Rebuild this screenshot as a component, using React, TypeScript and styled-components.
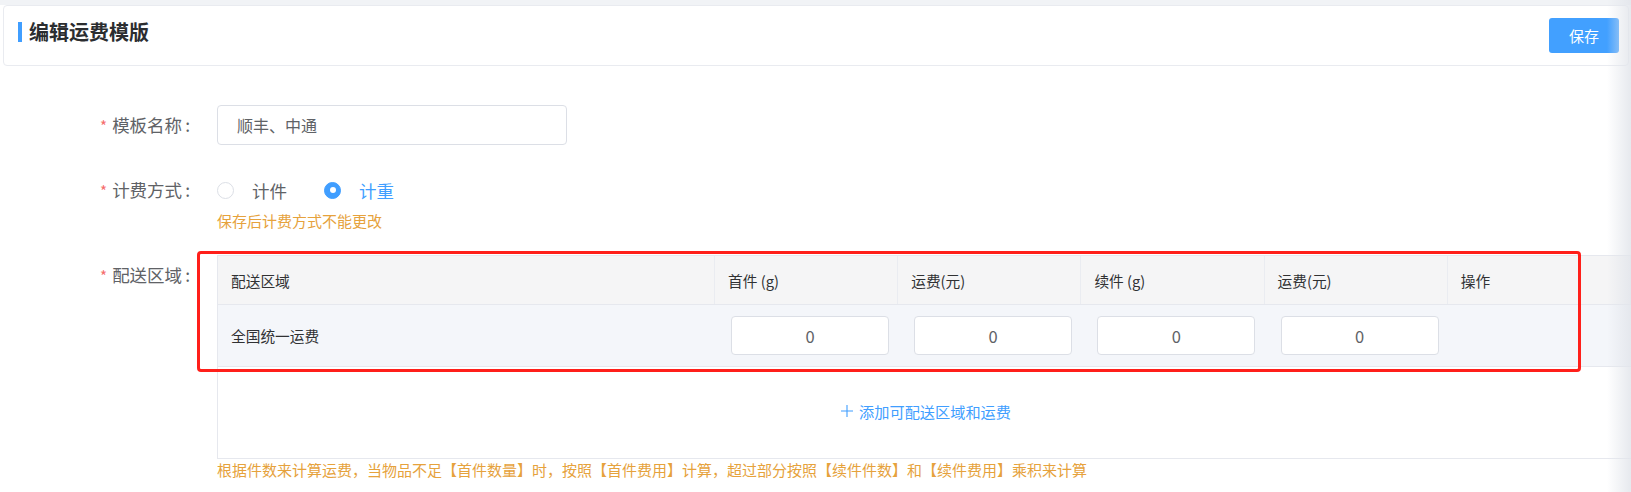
import styled, { createGlobalStyle } from "styled-components";

// ------------------------------------- ESTILOS -------------------------------------

const GlobalStyle = createGlobalStyle`
  body {
    margin: 0;
    background: #fff;
    font-family: "Noto Sans CJK SC", "Noto Sans", sans-serif;
    overflow: hidden;
  }
  * {
    box-sizing: border-box;
  }
`;

const Page = styled.div`
  position: relative;
  width: 1631px;
  height: 492px;
  overflow: hidden;
  padding-top: 5px;
  background: linear-gradient(#f1f3f6 0 5px, #fff 5px);
`;

const EdgeShade = styled.div`
  position: absolute;
  top: 0;
  right: 0;
  bottom: 0;
  width: 24px;
  background: linear-gradient(to right, rgba(232, 234, 239, 0), rgba(226, 229, 235, 0.85));
  pointer-events: none;
`;

const HeaderCard = styled.div`
  display: flex;
  align-items: flex-start;
  justify-content: space-between;
  height: 61px;
  margin: 0 2px 0 3px;
  padding: 12px 9px 0 14px;
  background: #fff;
  border: 1px solid #e9ebf0;
  border-radius: 4px;
`;

const Title = styled.h1`
  display: flex;
  align-items: center;
  gap: 7px;
  margin: 4px 0 0;
  font-size: 20px;
  line-height: 20px;
  font-weight: 700;
  color: #2b2d30;

  &::before {
    content: "";
    width: 4px;
    height: 20px;
    background: #409eff;
  }
`;

const SaveButton = styled.button`
  width: 70px;
  height: 35px;
  border: 0;
  border-radius: 3px;
  background: #42a0ff;
  color: #fff;
  font-family: inherit;
  font-size: 15px;
  cursor: pointer;
`;

const Form = styled.form`
  padding: 39px 0 0 80px;
`;

const FormItem = styled.div`
  display: flex;
  margin-bottom: 24px;
`;

const Label = styled.label`
  flex: none;
  width: 137px;
  padding-right: 27px;
  text-align: right;
  line-height: 40px;
  font-size: 17.5px;
  color: #606266;
  white-space: nowrap;
`;

const Required = styled.span`
  margin-right: 5px;
  font-size: 15px;
  color: #f56c6c;
`;

const Colon = styled.span`
  margin-left: 3px;
`;

const ItemContent = styled.div`
  position: relative;
  flex: 1;
  min-width: 0;
`;

const TextInput = styled.input`
  width: 350px;
  height: 40px;
  padding: 0 19px;
  border: 1px solid #dcdfe6;
  border-radius: 4px;
  font-family: inherit;
  font-size: 16px;
  color: #606266;
  outline: none;
`;

const RadioGroup = styled.div`
  display: flex;
  align-items: center;
  height: 40px;
`;

const RadioOption = styled.label<{ $checked?: boolean }>`
  display: flex;
  align-items: center;
  gap: 18px;
  margin-right: 37px;
  font-size: 17.5px;
  color: ${(p) => (p.$checked ? "#409eff" : "#606266")};
  cursor: pointer;
`;

const RadioCircle = styled.span<{ $checked?: boolean }>`
  display: flex;
  align-items: center;
  justify-content: center;
  width: 17px;
  height: 17px;
  border-radius: 50%;
  border: 1px solid ${(p) => (p.$checked ? "#409eff" : "#dcdfe6")};
  background: ${(p) => (p.$checked ? "#409eff" : "#fff")};

  &::after {
    content: "";
    width: 6px;
    height: 6px;
    border-radius: 50%;
    background: #fff;
    display: ${(p) => (p.$checked ? "block" : "none")};
  }
`;

const Hint = styled.p`
  margin: 1px 0 0;
  font-size: 15px;
  line-height: 20px;
  color: #e6a23c;
  white-space: nowrap;
`;

const Table = styled.div`
  width: 1420px;
  border: 1px solid #e6e8ee;
`;

const Row = styled.div<{ $head?: boolean }>`
  display: grid;
  grid-template-columns: 497px repeat(5, 183.2px);
  height: ${(p) => (p.$head ? "49px" : "62px")};
  background: ${(p) => (p.$head ? "#f5f5f6" : "#f4f6fa")};
  border-bottom: 1px solid #e6e8ee;
`;

const Cell = styled.div<{ $head?: boolean }>`
  display: flex;
  align-items: center;
  padding: 0 13px;
  font-size: 14.7px;
  color: #303133;
  border-right: ${(p) => (p.$head ? "1px solid #eaecf1" : "0")};
`;

const CellInput = styled.input`
  width: 158px;
  height: 39px;
  margin-left: 3px;
  border: 1px solid #dcdfe6;
  border-radius: 4px;
  background: #fff;
  text-align: center;
  font-family: inherit;
  font-size: 16.5px;
  color: #606266;
  outline: none;
`;

const AddArea = styled.div`
  display: flex;
  align-items: center;
  justify-content: center;
  height: 91px;
  padding: 0 2px 4px 0;
`;

const AddLink = styled.a`
  display: flex;
  align-items: center;
  gap: 6px;
  font-size: 15.2px;
  color: #409eff;
  cursor: pointer;
`;

const Highlight = styled.div`
  position: absolute;
  left: -20px;
  top: -4px;
  width: 1384px;
  height: 121px;
  border: 3px solid #ff1f1a;
  border-radius: 4px;
  pointer-events: none;
`;

// ------------------------------------- COMPONENTE -------------------------------------

const columns = ["配送区域", "首件 (g)", "运费(元)", "续件 (g)", "运费(元)", "操作"];

const App = () => {
  return (
    <>
      <GlobalStyle />
      <Page>
        <HeaderCard>
          <Title>编辑运费模版</Title>
          <SaveButton type="button">保存</SaveButton>
        </HeaderCard>

        <Form>
          <FormItem>
            <Label>
              <Required>*</Required>模板名称<Colon>:</Colon>
            </Label>
            <ItemContent>
              <TextInput defaultValue="顺丰、中通" />
            </ItemContent>
          </FormItem>

          <FormItem>
            <Label>
              <Required>*</Required>计费方式<Colon>:</Colon>
            </Label>
            <ItemContent>
              <RadioGroup>
                <RadioOption>
                  <RadioCircle />
                  计件
                </RadioOption>
                <RadioOption $checked>
                  <RadioCircle $checked />
                  计重
                </RadioOption>
              </RadioGroup>
              <Hint>保存后计费方式不能更改</Hint>
            </ItemContent>
          </FormItem>

          <FormItem>
            <Label>
              <Required>*</Required>配送区域<Colon>:</Colon>
            </Label>
            <ItemContent>
              <Table>
                <Row $head>
                  {columns.map((c, i) => (
                    <Cell $head key={i}>
                      {c}
                    </Cell>
                  ))}
                </Row>
                <Row>
                  <Cell>全国统一运费</Cell>
                  {[0, 1, 2, 3].map((i) => (
                    <Cell key={i}>
                      <CellInput defaultValue="0" />
                    </Cell>
                  ))}
                  <Cell />
                </Row>
                <AddArea>
                  <AddLink>
                    <svg width="12" height="12" viewBox="0 0 12 12">
                      <path d="M6 0v12M0 6h12" stroke="#409eff" strokeWidth="1.1" />
                    </svg>
                    添加可配送区域和运费
                  </AddLink>
                </AddArea>
              </Table>
              <Hint>
                根据件数来计算运费，当物品不足【首件数量】时，按照【首件费用】计算，超过部分按照【续件件数】和【续件费用】乘积来计算
              </Hint>
              <Highlight />
            </ItemContent>
          </FormItem>
        </Form>

        <EdgeShade />
      </Page>
    </>
  );
};

export default App;
